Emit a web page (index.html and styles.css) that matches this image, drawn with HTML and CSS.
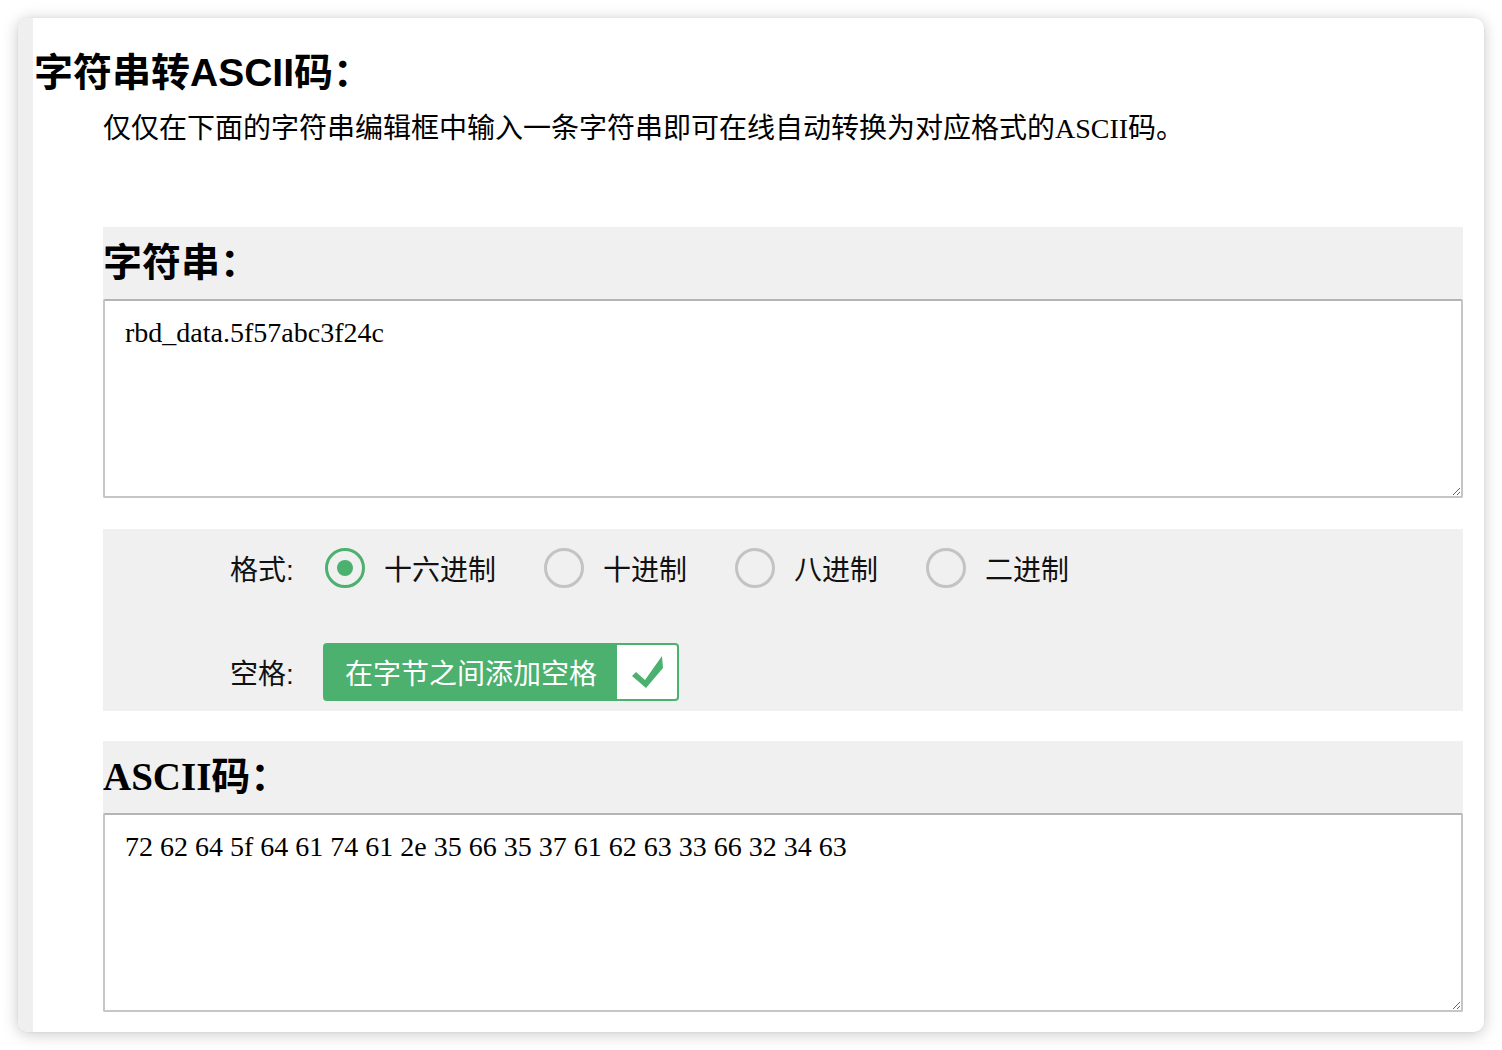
FILE: index.html
```html
<!DOCTYPE html>
<html lang="zh-CN">
<head>
<meta charset="utf-8">
<title>字符串转ASCII码</title>
<link rel="stylesheet" href="styles.css">
</head>
<body>
<div class="window">
  <div class="gutter"></div>
  <div class="content">
    <h1 class="title">字符串转ASCII码：</h1>
    <p class="desc">仅仅在下面的字符串编辑框中输入一条字符串即可在线自动转换为对应格式的ASCII码。</p>

    <section class="block">
      <h2 class="block-head">字符串：</h2>
      <textarea class="field" spellcheck="false">rbd_data.5f57abc3f24c</textarea>
    </section>

    <div class="options">
      <div class="opt-row">
        <span class="opt-label label-format">格式:</span>
        <span class="opt"><span class="radio checked"></span><span class="opt-text">十六进制</span></span>
        <span class="opt"><span class="radio"></span><span class="opt-text">十进制</span></span>
        <span class="opt"><span class="radio"></span><span class="opt-text">八进制</span></span>
        <span class="opt"><span class="radio"></span><span class="opt-text">二进制</span></span>
      </div>
      <div class="opt-row row-space">
        <span class="opt-label">空格:</span>
        <span class="toggle">
          <span class="toggle-text">在字节之间添加空格</span>
          <span class="toggle-box">
            <svg width="60" height="54" viewBox="0 0 60 54" aria-hidden="true">
              <polygon points="15,31 19,27 28,35 45,11 46,23 29,43" fill="#4cb06e"/>
            </svg>
          </span>
        </span>
      </div>
    </div>

    <section class="block block-out">
      <h2 class="block-head">ASCII码：</h2>
      <textarea class="field" spellcheck="false">72 62 64 5f 64 61 74 61 2e 35 66 35 37 61 62 63 33 66 32 34 63</textarea>
    </section>
  </div>
</div>
</body>
</html>
```

FILE: styles.css
```css
* {
  box-sizing: border-box;
}

html, body {
  margin: 0;
  padding: 0;
  background: #ffffff;
}

body {
  padding: 18px;
  height: 1050px;
  overflow: hidden;
}

.window {
  display: flex;
  width: 1466px;
  height: 1014px;
  background: #ffffff;
  border-radius: 10px;
  overflow: hidden;
  box-shadow: 0 2px 16px rgba(0, 0, 0, 0.22), 0 0 2px rgba(0, 0, 0, 0.08);
}

.gutter {
  width: 15px;
  flex: none;
  background: #efefef;
}

.content {
  flex: 1;
  padding: 33px 21px 0 0;
  color: #000;
}

.title {
  margin: 0 0 0 1px;
  font-family: "Liberation Sans", "Noto Sans CJK SC", sans-serif;
  font-weight: bold;
  font-size: 39px;
  line-height: 44px;
}

.desc {
  margin: 14px 0 0 70px;
  font-family: "Liberation Serif", "Noto Sans CJK SC", serif;
  font-size: 28px;
  line-height: 40px;
}

.block {
  margin: 78px 0 0 70px;
}

.block-out {
  margin-top: 30px;
}

.block-head {
  margin: 0;
  height: 72px;
  background: #f0f0f0;
  font-family: "Liberation Serif", "Noto Sans CJK SC", serif;
  font-weight: bold;
  font-size: 39px;
  line-height: 72px;
}

.field {
  display: block;
  width: 100%;
  height: 199px;
  margin: 0;
  padding: 16px 20px;
  border: 2px solid #c6c6c6;
  border-top-color: #b4b4b4;
  border-radius: 2px;
  background: #fff;
  color: #000;
  font-family: "Liberation Serif", serif;
  font-size: 28px;
  line-height: 32px;
  outline: none;
}

.options {
  margin: 31px 0 0 70px;
  padding: 10px 0 10px 127px;
  height: 182px;
  background: #f0f0f0;
  font-family: "Liberation Sans", "Noto Sans CJK SC", sans-serif;
  font-size: 28px;
  color: #111;
}

.opt-row {
  display: flex;
  align-items: center;
  height: 58px;
}

.row-space {
  margin-top: 46px;
}

.opt-label {
  width: 93px;
  flex: none;
}

.label-format {
  width: 95px;
}

.opt {
  display: flex;
  align-items: center;
  margin-right: 48px;
}

.radio {
  position: relative;
  width: 40px;
  height: 40px;
  border: 3px solid #c3c3c3;
  border-radius: 50%;
  margin-right: 19px;
  flex: none;
}

.radio.checked {
  border-color: #4cb06e;
}

.radio.checked::after {
  content: "";
  position: absolute;
  left: 9px;
  top: 9px;
  width: 16px;
  height: 16px;
  border-radius: 50%;
  background: #4cb06e;
}

.toggle {
  display: flex;
  align-items: stretch;
  height: 58px;
  border: 2px solid #4cb06e;
  border-radius: 4px;
  background: #4cb06e;
  overflow: hidden;
}

.toggle-text {
  display: flex;
  align-items: center;
  padding: 0 20px;
  color: #fff;
  font-size: 28px;
}

.toggle-box {
  display: flex;
  align-items: center;
  justify-content: center;
  width: 60px;
  background: #fff;
}

.toggle-box svg {
  display: block;
}
```
